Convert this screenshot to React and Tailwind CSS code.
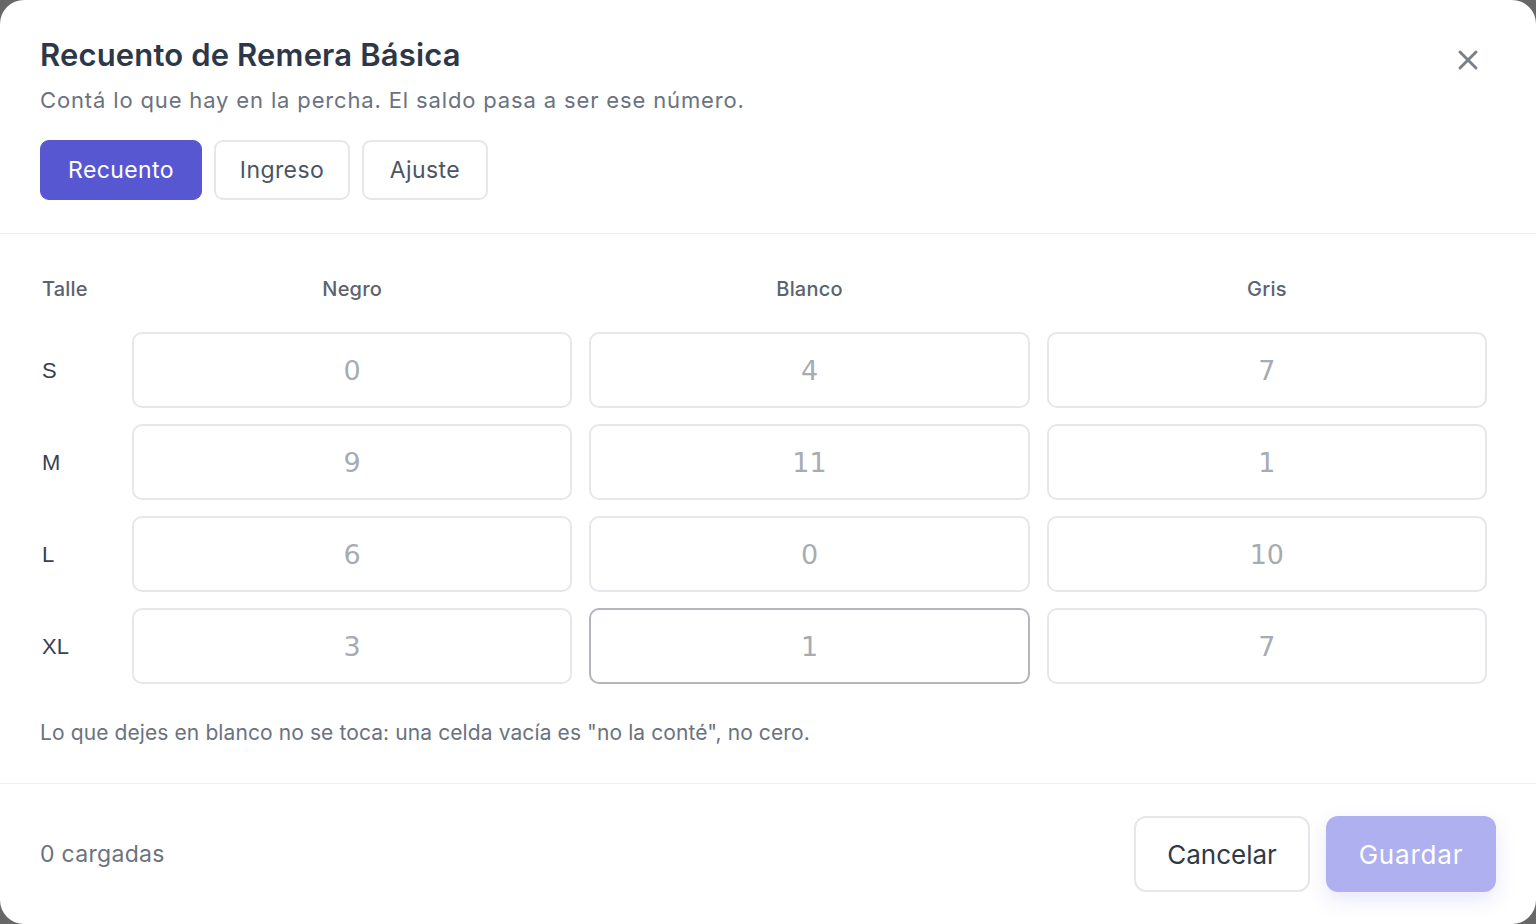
import React, { useState } from 'react';
import { X } from 'lucide-react';

const sizes = ['S', 'M', 'L', 'XL'];
const colors = ['Negro', 'Blanco', 'Gris'];

// saldo actual por talle y color, se muestra como placeholder
const stock = {
  S: [0, 4, 7],
  M: [9, 11, 1],
  L: [6, 0, 10],
  XL: [3, 1, 7],
};

const modes = [
  { name: 'Recuento', width: 'w-[162px]' },
  { name: 'Ingreso', width: 'w-[136px]' },
  { name: 'Ajuste', width: 'w-[126px]' },
];

export default function App() {
  const [mode, setMode] = useState('Recuento');
  const [counts, setCounts] = useState({});

  const loaded = Object.values(counts).filter(v => v !== '').length;

  const setCell = (key, value) => {
    setCounts(prev => ({ ...prev, [key]: value }));
  };

  return (
    <div className="w-[1536px] h-[924px] bg-[#676767]" style={{ fontFamily: 'Inter, "Noto Sans", sans-serif' }}>
      <div className="w-full h-full bg-white rounded-[24px] flex flex-col">

        {/* Header */}
        <div className="relative px-10 pt-[36px] pb-[33px] border-b border-[#eceef3]">
          <h2 className="text-[31px] leading-[38px] font-semibold text-[#2d3748] tracking-[0.15px]">Recuento de Remera Básica</h2>
          <p className="mt-[11px] text-[22px] leading-[30px] text-[#6b7280] tracking-[0.85px]">Contá lo que hay en la percha. El saldo pasa a ser ese número.</p>
          <button className="absolute right-[52px] top-[44px] text-[#7b818b]">
            <X size={32} strokeWidth={2.2} />
          </button>

          <div className="mt-[25px] flex gap-3">
            {modes.map(m => (
              <button
                key={m.name}
                onClick={() => setMode(m.name)}
                className={`h-[60px] ${m.width} rounded-[9px] text-[23px] tracking-[0.4px] ${
                  mode === m.name
                    ? 'bg-[#5757d2] text-white border border-[#5757d2]'
                    : 'bg-white text-[#4b5563] border-2 border-[#e5e7eb]'
                }`}
              >
                {m.name}
              </button>
            ))}
          </div>
        </div>

        {/* Grid de talles x colores */}
        <div className="pl-10 pr-[49px] pt-[40px] pb-[36px] border-b border-[#eceef3]">
          <div className="grid grid-cols-[75px_1fr_1fr_1fr] gap-x-[17px] gap-y-4">
            <div className="h-[30px] mb-[12px] flex items-center pl-[2px] text-[20px] font-medium text-[#5b6370] tracking-[0.2px]">Talle</div>
            {colors.map(c => (
              <div key={c} className="h-[30px] mb-[12px] flex items-center justify-center text-[20px] font-medium text-[#5b6370] tracking-[0.2px]">{c}</div>
            ))}

            {sizes.map(s => (
              <React.Fragment key={s}>
                <div className="h-[76px] flex items-center pl-[2px] text-[22px] text-[#374151]" style={{ fontFamily: '"Liberation Sans", Arial, sans-serif' }}>{s}</div>
                {colors.map((c, i) => {
                  const key = `${s}-${c}`;
                  const active = s === 'XL' && c === 'Blanco';
                  return (
                    <input
                      key={key}
                      value={counts[key] ?? ''}
                      onChange={e => setCell(key, e.target.value)}
                      placeholder={String(stock[s][i])}
                      inputMode="numeric"
                      className={`h-[76px] w-full rounded-[10px] border-2 bg-white text-center text-[27px] text-[#374151] outline-none placeholder:text-[#a7abb3] ${
                        active ? 'border-[#b3b7bd]' : 'border-[#e5e7eb]'
                      }`}
                      style={{ fontFamily: '"DejaVu Sans", sans-serif' }}
                    />
                  );
                })}
              </React.Fragment>
            ))}
          </div>

          <p className="mt-[35px] text-[21px] leading-[28px] text-[#6b7280] tracking-[0.1px]">
            Lo que dejes en blanco no se toca: una celda vacía es "no la conté", no cero.
          </p>
        </div>

        {/* Footer */}
        <div className="flex-1 flex items-center justify-between pl-10 pr-[40px]">
          <span className="text-[23px] text-[#6b7280] tracking-[0.3px]">{loaded} cargadas</span>
          <div className="flex gap-4">
            <button className="h-[76px] w-[176px] rounded-[12px] border-2 border-[#e5e7eb] bg-white text-[26px] text-[#2f3a48]">
              Cancelar
            </button>
            <button
              disabled={loaded === 0}
              className="h-[76px] w-[170px] rounded-[12px] bg-[#aeb0f0] text-[26px] text-white tracking-[0.8px] shadow-[0_8px_20px_rgba(120,120,230,0.18)]"
            >
              Guardar
            </button>
          </div>
        </div>

      </div>
    </div>
  );
}
